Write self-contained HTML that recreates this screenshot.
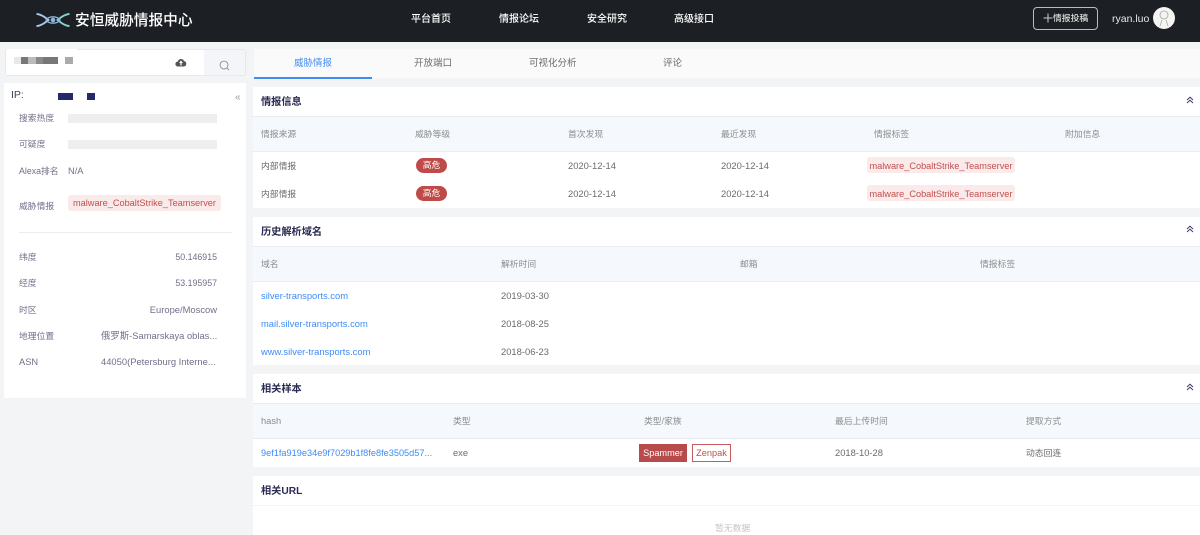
<!DOCTYPE html>
<html lang="zh"><head><meta charset="utf-8"><title>安恒威胁情报中心</title>
<style>
*{margin:0;padding:0;box-sizing:border-box}
html,body{width:1200px;height:535px;overflow:hidden;background:#f3f4f6}
body{font-family:"Liberation Sans","Noto Sans CJK SC",sans-serif;position:relative;font-size:9.3px;color:#666;filter:blur(.25px)}
.r{position:absolute}
.t{position:absolute;line-height:14px;height:14px;white-space:nowrap;font-size:8.8px;color:#6b6b6b;transform:translateY(1px)}
.m{font-size:9.3px}
.tab{font-size:9.5px}
.h{color:#8c8c8c}
.s{color:#2a2b52;font-size:10.2px;font-weight:bold}
.l{color:#70708a}
.b{color:#3e8bf5;font-size:9.4px}
.d{font-size:9.4px}
.n{color:#fff;font-size:10px;font-weight:500}
.tag{position:absolute;background:#fbeaea;color:#c0504f;border-radius:3px;height:16px;line-height:18px;font-size:9.2px;white-space:nowrap;text-align:center;overflow:hidden}
.hi{position:absolute;left:416px;width:31px;height:15px;border-radius:8px;background:#bf4a4a;color:#fff;text-align:center;line-height:15px;font-size:8.8px}
.sec{position:absolute;left:253px;width:947px;background:#fff}
.th{position:absolute;left:253px;width:947px;background:#f5f9fd;border-top:1px solid #e9edf2;border-bottom:1px solid #e9edf2}
.bar{position:absolute;left:68px;width:149px;height:9px;background:#eeeeee}
</style></head><body>
<div class="r" style="left:0;top:0;width:1200px;height:42px;background:#1c1f24"></div>
<svg class="r" style="left:36px;top:13px" width="34" height="14" viewBox="0 0 34 14" fill="none">
<path d="M.5 .8C5 1.500 8 3.500 12.500 7C8 10.500 5 12.500 .5 13.200" stroke="#a9c9e8" stroke-width="1.800"/>
<path d="M33.500 .8C29 1.500 26 3.500 21.500 7C26 10.500 29 12.500 33.500 13.200" stroke="#86d3d3" stroke-width="1.800"/>
<path d="M10 7C13 2.700 21 2.700 24 7C21 11.300 13 11.300 10 7Z" stroke="#8fb4dc" stroke-width="1.400"/>
<circle cx="17" cy="7" r="2.300" fill="#8fb4dc"/>
</svg>
<div class="t" style="left:75px;top:11px;height:18px;line-height:18px;font-size:14.700px;font-weight:500;color:#fff">安恒威胁情报中心</div>
<div class="t n" style="left:411px;top:12px">平台首页</div>
<div class="t n" style="left:499px;top:12px">情报论坛</div>
<div class="t n" style="left:587px;top:12px">安全研究</div>
<div class="t n" style="left:674px;top:12px">高级接口</div>
<div class="r" style="left:1033px;top:7px;width:65px;height:23px;border:1px solid #b9bcc0;border-radius:4px"></div>
<svg class="r" style="left:1043px;top:13px" width="10" height="10" viewBox="0 0 10 10" stroke="#cfcfcf" stroke-width="1"><path d="M5 .5V9.500M.5 5H9.500"/></svg>
<div class="t" style="left:1053px;top:10px;color:#dcdcdc;font-weight:500">情报投稿</div>
<div class="t" style="left:1112px;top:11px;color:#e8e8e8;font-size:10.500px">ryan.luo</div>
<div class="r" style="left:1153px;top:7px;width:22px;height:22px;border-radius:50%;background:#f4f4f2"></div>
<svg class="r" style="left:1153px;top:7px" width="22" height="22" viewBox="0 0 22 22" fill="none" stroke="#a8a8a8" stroke-width=".8"><circle cx="11" cy="8" r="4"/><path d="M7 19l2-6M15 19l-2-6"/></svg>

<!-- search -->
<div class="r" style="left:5px;top:49px;width:241px;height:27px;background:#f3f5f8;border:1px solid #e6e8ec;border-radius:3px"></div>
<div class="r" style="left:6px;top:50px;width:198px;height:25px;background:#fff"></div>
<div class="r" style="left:7px;top:49px;width:70px;height:3px;background:#fff"></div>
<div class="r" style="left:14px;top:57px;width:7px;height:7px;background:#e8e8e8"></div>
<div class="r" style="left:21px;top:57px;width:7px;height:7px;background:#777"></div>
<div class="r" style="left:28px;top:57px;width:8px;height:7px;background:#bbb"></div>
<div class="r" style="left:36px;top:57px;width:7px;height:7px;background:#8a8a8a"></div>
<div class="r" style="left:43px;top:57px;width:15px;height:7px;background:#777"></div>
<div class="r" style="left:65px;top:57px;width:8px;height:7px;background:#aaa"></div>
<svg class="r" style="left:175px;top:57px" width="12" height="10" viewBox="0 0 12 10"><path d="M3 9.500A2.500 2.500 0 0 1 2.800 4.500A3.300 3.300 0 0 1 9 4A2.800 2.800 0 0 1 9 9.500Z" fill="#555"/><path d="M6 3.500L8 6H4Z" fill="#fff"/><rect x="5.400" y="5.500" width="1.200" height="3" fill="#fff"/></svg>
<svg class="r" style="left:219px;top:60px" width="11" height="11" viewBox="0 0 12 12" fill="none" stroke="#8a8f96" stroke-width="1"><circle cx="5.500" cy="5.500" r="4.300"/><path d="M8.700 8.700L11 11"/></svg>

<!-- left panel -->
<div class="r" style="left:4px;top:83px;width:242px;height:315px;background:#fff"></div>
<div class="t" style="left:11px;top:87px;font-size:10.500px;color:#3b3c5c">IP:</div>
<div class="r" style="left:58px;top:93px;width:15px;height:7px;background:#25286a"></div>
<div class="r" style="left:87px;top:93px;width:8px;height:7px;background:#25286a"></div>
<div class="t" style="left:235px;top:90px;color:#999;font-size:10px">«</div>
<div class="t l" style="left:19px;top:110px">搜索热度</div><div class="bar" style="top:114px"></div>
<div class="t l" style="left:19px;top:136px">可疑度</div><div class="bar" style="top:140px"></div>
<div class="t l" style="left:19px;top:163px">Alexa排名</div><div class="t l m" style="left:68px;top:163px">N/A</div>
<div class="t l" style="left:19px;top:198px">威胁情报</div>
<div class="tag" style="left:68px;top:195px;width:153px;line-height:17px">malware_CobaltStrike_Teamserver</div>
<div class="r" style="left:19px;top:232px;width:213px;height:1px;background:#ececef"></div>
<div class="t l" style="left:19px;top:249px">纬度</div><div class="t l" style="right:983px;top:249px">50.146915</div>
<div class="t l" style="left:19px;top:275px">经度</div><div class="t l" style="right:983px;top:275px">53.195957</div>
<div class="t l" style="left:19px;top:302px">时区</div><div class="t l d" style="right:983px;top:302px">Europe/Moscow</div>
<div class="t l" style="left:19px;top:328px">地理位置</div><div class="t l d" style="left:101px;top:328px">俄罗斯-Samarskaya oblas...</div>
<div class="t l m" style="left:19px;top:354px">ASN</div><div class="t l d" style="left:101px;top:354px">44050(Petersburg Interne...</div>

<!-- tabs -->
<div class="r" style="left:254px;top:49px;width:946px;height:29px;background:#fafafa"></div>
<div class="r" style="left:254px;top:77px;width:118px;height:2px;background:#3e8bf5"></div>
<div class="t tab" style="left:294px;top:56px;color:#3e8bf5">威胁情报</div>
<div class="t tab" style="left:414px;top:56px">开放端口</div>
<div class="t tab" style="left:529px;top:56px">可视化分析</div>
<div class="t tab" style="left:663px;top:56px">评论</div>

<!-- section 1 -->
<div class="sec" style="top:87px;height:121px"></div>
<div class="t s" style="left:261px;top:95px">情报信息</div>
<svg class="r chev" style="left:1186px;top:96px" width="8" height="8" viewBox="0 0 8 8" fill="none" stroke="#3d3f6e" stroke-width="1"><path d="M1 4L4 1.200L7 4M1 7L4 4.200L7 7"/></svg>
<div class="th" style="top:116px;height:36px"></div>
<div class="t h" style="left:261px;top:126px">情报来源</div>
<div class="t h" style="left:415px;top:126px">威胁等级</div>
<div class="t h" style="left:568px;top:126px">首次发现</div>
<div class="t h" style="left:721px;top:126px">最近发现</div>
<div class="t h" style="left:874px;top:126px">情报标签</div>
<div class="t h" style="left:1065px;top:126px">附加信息</div>
<div class="t" style="left:261px;top:158px">内部情报</div>
<div class="hi" style="top:158px">高危</div>
<div class="t d" style="left:568px;top:158px">2020-12-14</div>
<div class="t d" style="left:721px;top:158px">2020-12-14</div>
<div class="tag" style="left:867px;top:157px;width:148px">malware_CobaltStrike_Teamserver</div>
<div class="t" style="left:261px;top:186px">内部情报</div>
<div class="hi" style="top:186px">高危</div>
<div class="t d" style="left:568px;top:186px">2020-12-14</div>
<div class="t d" style="left:721px;top:186px">2020-12-14</div>
<div class="tag" style="left:867px;top:185px;width:148px">malware_CobaltStrike_Teamserver</div>

<!-- section 2 -->
<div class="sec" style="top:217px;height:148px"></div>
<div class="t s" style="left:261px;top:225px">历史解析域名</div>
<svg class="r" style="left:1186px;top:225px" width="8" height="8" viewBox="0 0 8 8" fill="none" stroke="#3d3f6e" stroke-width="1"><path d="M1 4L4 1.200L7 4M1 7L4 4.200L7 7"/></svg>
<div class="th" style="top:246px;height:36px"></div>
<div class="t h" style="left:261px;top:256px">域名</div>
<div class="t h" style="left:501px;top:256px">解析时间</div>
<div class="t h" style="left:740px;top:256px">邮箱</div>
<div class="t h" style="left:980px;top:256px">情报标签</div>
<div class="t b" style="left:261px;top:288px">silver-transports.com</div>
<div class="t d" style="left:501px;top:288px">2019-03-30</div>
<div class="t b" style="left:261px;top:316px">mail.silver-transports.com</div>
<div class="t d" style="left:501px;top:316px">2018-08-25</div>
<div class="t b" style="left:261px;top:344px">www.silver-transports.com</div>
<div class="t d" style="left:501px;top:344px">2018-06-23</div>

<!-- section 3 -->
<div class="sec" style="top:374px;height:93px"></div>
<div class="t s" style="left:261px;top:382px">相关样本</div>
<svg class="r" style="left:1186px;top:383px" width="8" height="8" viewBox="0 0 8 8" fill="none" stroke="#3d3f6e" stroke-width="1"><path d="M1 4L4 1.200L7 4M1 7L4 4.200L7 7"/></svg>
<div class="th" style="top:403px;height:36px"></div>
<div class="t h m" style="left:261px;top:413px">hash</div>
<div class="t h" style="left:453px;top:413px">类型</div>
<div class="t h" style="left:644px;top:413px">类型/家族</div>
<div class="t h" style="left:835px;top:413px">最后上传时间</div>
<div class="t h" style="left:1026px;top:413px">提取方式</div>
<div class="t b" style="left:261px;top:445px;font-size:9.200px">9ef1fa919e34e9f7029b1f8fe8fe3505d57...</div>
<div class="t m" style="left:453px;top:445px">exe</div>
<div class="r" style="left:639px;top:444px;width:48px;height:18px;background:#b94a4b;color:#fff;text-align:center;line-height:19px;font-size:9.200px">Spammer</div>
<div class="r" style="left:692px;top:444px;width:39px;height:18px;border:1px solid #c9595a;color:#c0504f;text-align:center;line-height:17px;font-size:9.200px">Zenpak</div>
<div class="t d" style="left:835px;top:445px">2018-10-28</div>
<div class="t" style="left:1026px;top:445px">动态回连</div>

<!-- section 4 -->
<div class="sec" style="top:476px;height:59px"></div>
<div class="t s" style="left:261px;top:484px">相关URL</div>
<div class="r" style="left:253px;top:505px;width:947px;height:1px;background:#f3f3f3"></div>
<div class="t" style="left:715px;top:520px;color:#c4c4c4">暂无数据</div>
</body></html>
